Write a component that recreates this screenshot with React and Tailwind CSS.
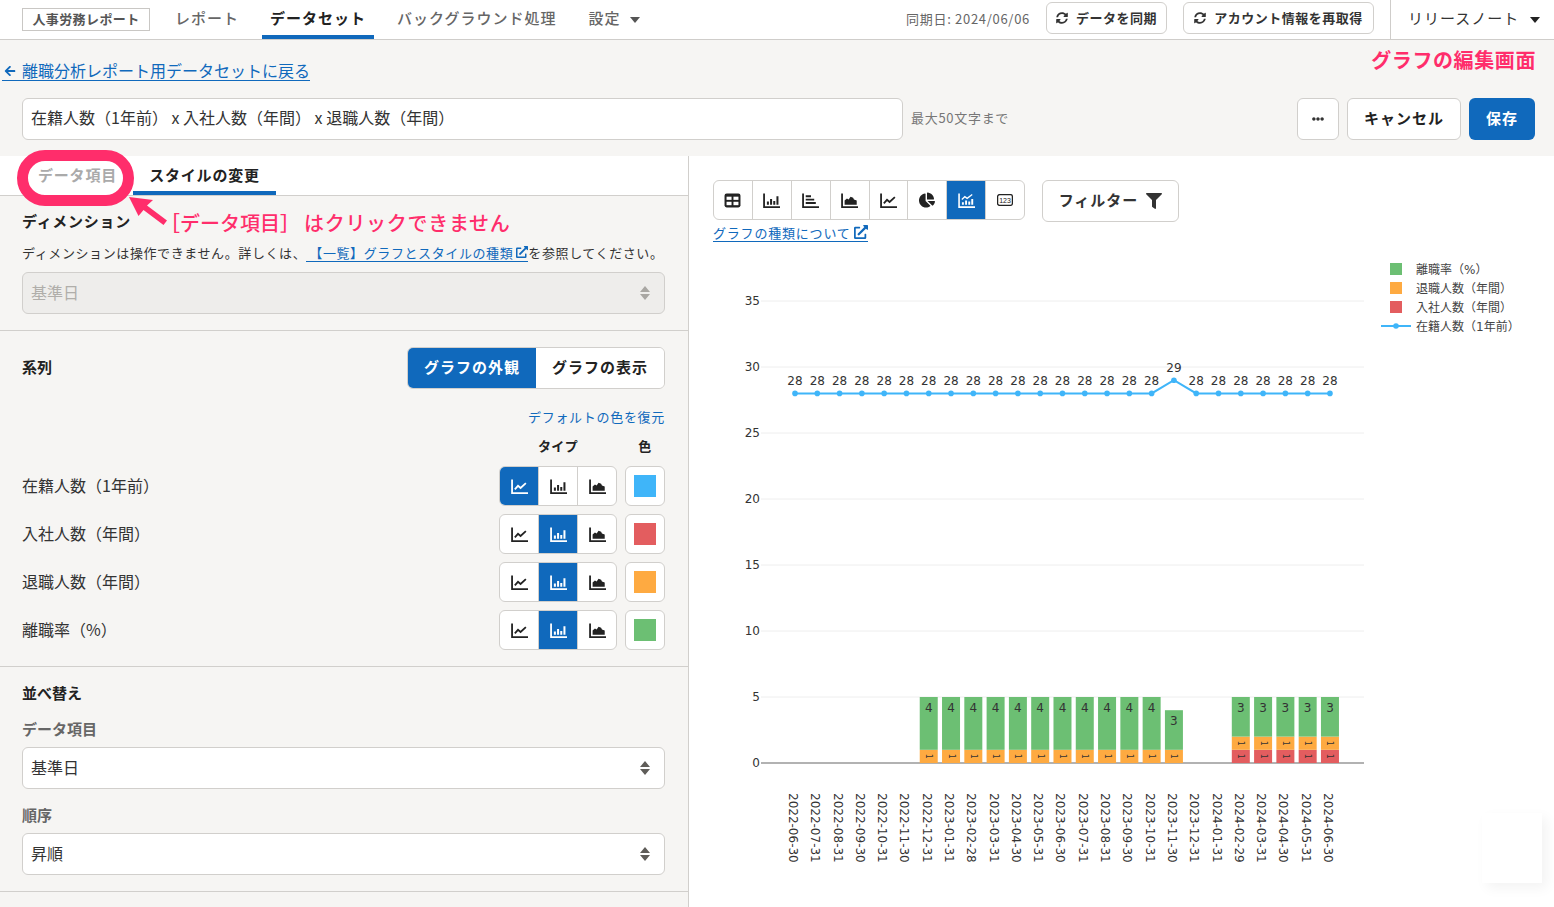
import { FaSyncAlt, FaFilter, FaExternalLinkAlt, FaChartPie, FaEllipsisH, FaArrowLeft } from 'react-icons/fa';

const dates = [
  '2022-06-30', '2022-07-31', '2022-08-31', '2022-09-30', '2022-10-31', '2022-11-30', '2022-12-31', '2023-01-31', '2023-02-28',
  '2023-03-31', '2023-04-30', '2023-05-31', '2023-06-30', '2023-07-31', '2023-08-31', '2023-09-30', '2023-10-31', '2023-11-30',
  '2023-12-31', '2024-01-31', '2024-02-29', '2024-03-31', '2024-04-30', '2024-05-31', '2024-06-30',
];
const headcount = dates.map((_, i) => (i === 17 ? 29 : 28));
const joined = dates.map((_, i) => (i >= 20 ? 1 : 0));
const left = dates.map((_, i) => (i >= 6 && i <= 17) || i >= 20 ? 1 : 0);
const rate = dates.map((_, i) => {
  if (i >= 6 && i <= 16) return 4;
  if (i === 17 || i >= 20) return 3;
  return 0;
});

const BLUE = '#3fb5f9';
const RED = '#e35d5f';
const ORANGE = '#feaa41';
const GREEN = '#6cbf73';
const PINK = '#ff2d6b';

const xAt = (i) => 795 + i * 22.29;
const yAt = (v) => 763 - v * 13.2;

function LineIcon() {
  return (
    <svg viewBox="0 0 16 16" className="w-[17px] h-[17px]" fill="none" stroke="currentColor" strokeWidth="1.7">
      <path d="M1 1.500v12.700h15" />
      <path d="M3.600 10.600 6.600 7.400l2.400 2 5-4.600" />
    </svg>
  );
}

function BarIcon() {
  return (
    <svg viewBox="0 0 16 16" className="w-[17px] h-[17px]" fill="none" stroke="currentColor" strokeWidth="1.7">
      <path d="M1 1.500v12.700h15" />
      <path d="M4.600 12V9M7.600 12V6.500M10.600 12V8.500M13.600 12V4" strokeWidth="1.9" />
    </svg>
  );
}

function HBarIcon() {
  return (
    <svg viewBox="0 0 16 16" className="w-[17px] h-[17px]" fill="none" stroke="currentColor" strokeWidth="1.7">
      <path d="M1 1.500v12.700h15" />
      <path d="M3.500 4h5M3.500 7.200h8M3.500 10.400h9.500" strokeWidth="1.8" />
    </svg>
  );
}

function AreaIcon() {
  return (
    <svg viewBox="0 0 16 16" className="w-[17px] h-[17px]" fill="none" stroke="currentColor" strokeWidth="1.7">
      <path d="M1 1.500v12.700h15" />
      <path d="M3.400 12V8l2.200-1.800 1.600.8 1.800-2.600 2.400 1 .8 1.600 2.600 1V12z" fill="currentColor" stroke="none" />
    </svg>
  );
}

function ComboIcon() {
  return (
    <svg viewBox="0 0 16 16" className="w-[17px] h-[17px]" fill="none" stroke="currentColor" strokeWidth="1.5">
      <path d="M1 1.500v12.700h15" />
      <path d="M3.600 7 6.400 4.400l2.200 1.600 4.800-3.600" strokeWidth="1.2" />
      <path d="M4.600 12V9.600M7.600 12V8M10.600 12V9M13.400 12V6.600" strokeWidth="1.8" />
    </svg>
  );
}

function TableIcon() {
  return (
    <svg viewBox="0 0 16 16" className="w-[17px] h-[17px]">
      <rect x="0.500" y="1.500" width="15" height="13" rx="2" fill="currentColor" />
      <rect x="2.400" y="4.400" width="4.700" height="3" fill="#fff" />
      <rect x="8.900" y="4.400" width="4.700" height="3" fill="#fff" />
      <rect x="2.400" y="9.200" width="4.700" height="3.200" fill="#fff" />
      <rect x="8.900" y="9.200" width="4.700" height="3.200" fill="#fff" />
    </svg>
  );
}

function NumberIcon() {
  return (
    <svg viewBox="0 0 16 12" className="w-4 h-3" fill="none">
      <rect x="0.600" y="0.600" width="14.800" height="10.800" rx="2" stroke="currentColor" strokeWidth="1.3" />
      <text x="8" y="8.600" textAnchor="middle" fontSize="7" fill="currentColor" fontFamily="Liberation Sans">123</text>
    </svg>
  );
}

function CaretDown({ className }) {
  return (
    <svg viewBox="0 0 10 6" className={className} fill="currentColor">
      <path d="M0 0h10L5 6z" />
    </svg>
  );
}

function SelectBox({ value, disabled }) {
  return (
    <div className={`h-[42px] rounded-md border border-[#d1cfcc] flex items-center justify-between pl-2 pr-[14px] text-base ${disabled ? 'bg-[#eeedeb] text-[#b0aeaa]' : 'bg-white text-[#333]'}`}>
      <span className="pb-[2px]">{value}</span>
      <svg viewBox="0 0 10 14" className={`w-2.5 h-3.5 ${disabled ? 'text-[#a9a7a3]' : 'text-[#5f5d59]'}`} fill="currentColor">
        <path d="M5 0l5 6H0zM5 14l5-6H0z" />
      </svg>
    </div>
  );
}

function SeriesRow({ name, active, color }) {
  const types = [LineIcon, BarIcon, AreaIcon];
  return (
    <div className="h-10 flex items-center">
      <span className="flex-1 text-base text-[#333] pb-[3px]">{name}</span>
      <div className="flex h-10 w-[118px] border border-[#d1cfcc] rounded-md overflow-hidden bg-white">
        {types.map((Icon, i) => (
          <div
            key={i}
            className={`flex-1 flex items-center justify-center ${i > 0 ? 'border-l border-[#d1cfcc]' : ''} ${i === active ? 'bg-[#1069bc] text-white' : 'text-[#222]'}`}
          >
            <Icon />
          </div>
        ))}
      </div>
      <div className="ml-2 w-10 h-10 border border-[#d1cfcc] rounded-md bg-white flex items-center justify-center">
        <div className="w-[22px] h-[22px]" style={{ backgroundColor: color }}></div>
      </div>
    </div>
  );
}

function Chart() {
  return (
    <svg viewBox="689 250 865 657" className="block w-[865px] h-[657px] mt-2" fontFamily="'DejaVu Sans','Noto Sans CJK JP',sans-serif">
      {/* grid */}
      {[5, 10, 15, 20, 25, 30, 35].map((v) => (
        <line key={v} x1="761" x2="1364" y1={yAt(v)} y2={yAt(v)} stroke="#eeeeee" />
      ))}
      <line x1="761" x2="1364" y1="763" y2="763" stroke="#999999" strokeWidth="1.5" />
      {[0, 5, 10, 15, 20, 25, 30, 35].map((v) => (
        <text key={v} x="760" y={yAt(v) + 4} textAnchor="end" fontSize="12" fill="#333">{v}</text>
      ))}

      {/* stacked bars */}
      {dates.map((d, i) => {
        const x = xAt(i) - 9;
        const redTop = yAt(joined[i]);
        const orangeTop = yAt(joined[i] + left[i]);
        const greenTop = yAt(joined[i] + left[i] + rate[i]);
        return (
          <g key={d}>
            {joined[i] > 0 && (
              <>
                <rect x={x} y={redTop} width="18" height="13.200" fill={RED} />
                <text transform={`translate(${xAt(i)} ${redTop + 6.6}) rotate(90)`} textAnchor="middle" dominantBaseline="central" fontSize="8" fill="#333">1</text>
              </>
            )}
            {left[i] > 0 && (
              <>
                <rect x={x} y={orangeTop} width="18" height="13.200" fill={ORANGE} />
                <text transform={`translate(${xAt(i)} ${orangeTop + 6.6}) rotate(90)`} textAnchor="middle" dominantBaseline="central" fontSize="8" fill="#333">1</text>
              </>
            )}
            {rate[i] > 0 && (
              <>
                <rect x={x} y={greenTop} width="18" height={orangeTop - greenTop} fill={GREEN} />
                <text x={xAt(i)} y={greenTop + 15} textAnchor="middle" fontSize="12" fill="#333">{rate[i]}</text>
              </>
            )}
            <text transform={`translate(${xAt(i) - 6} 793) rotate(90)`} fontSize="12" fill="#333">{d}</text>
          </g>
        );
      })}

      {/* headcount line */}
      <polyline points={headcount.map((v, i) => `${xAt(i)},${yAt(v)}`).join(' ')} fill="none" stroke={BLUE} strokeWidth="2" />
      {headcount.map((v, i) => (
        <g key={i}>
          <circle cx={xAt(i)} cy={yAt(v)} r="2.800" fill={BLUE} />
          <text x={xAt(i)} y={yAt(v) - 8} textAnchor="middle" fontSize="12" fill="#333">{v}</text>
        </g>
      ))}

      {/* legend */}
      <rect x="1390" y="263" width="12" height="12" fill={GREEN} />
      <rect x="1390" y="282" width="12" height="12" fill={ORANGE} />
      <rect x="1390" y="301" width="12" height="12" fill={RED} />
      <line x1="1381" x2="1411" y1="326" y2="326" stroke={BLUE} strokeWidth="2" />
      <circle cx="1396" cy="326" r="2.800" fill={BLUE} />
      <text x="1416" y="274" fontSize="12" fill="#444">離職率（%）</text>
      <text x="1416" y="293" fontSize="12" fill="#444">退職人数（年間）</text>
      <text x="1416" y="312" fontSize="12" fill="#444">入社人数（年間）</text>
      <text x="1416" y="331" fontSize="12" fill="#444">在籍人数（1年前）</text>
    </svg>
  );
}

function App() {
  const chartTypes = [TableIcon, BarIcon, HBarIcon, AreaIcon, LineIcon, null, ComboIcon, NumberIcon];

  return (
    <div className="relative h-[907px] overflow-hidden bg-[#f6f5f3] flex flex-col font-['Noto_Sans_CJK_JP',sans-serif] text-[#222]">
      {/* Header */}
      <header className="h-10 shrink-0 bg-white border-b border-[#cfcdca] flex items-stretch pl-[22px]">
        <div className="self-start mt-2 h-[23px] w-[128px] border border-[#c9c7c4] flex items-center justify-center text-[13px] font-bold tracking-[0.4px] text-[#555] pb-[1px]">人事労務レポート</div>
        <nav className="ml-[17px] flex items-stretch text-[15px] font-medium tracking-[1px] text-[#666]">
          <a className="px-2 flex items-center pb-[2px]">レポート</a>
          <a className="ml-[15px] px-2 flex items-center font-bold text-[#222] border-b-4 border-[#1069bc] pt-[2px]">データセット</a>
          <a className="ml-[15px] px-2 flex items-center pb-[2px]">バックグラウンド処理</a>
          <a className="ml-[16px] px-2 flex items-center pb-[2px]">
            設定
            <CaretDown className="w-2.5 h-1.5 ml-[10px] mt-[2px] text-[#555]" />
          </a>
        </nav>
        <div className="ml-auto flex items-center">
          <span className="text-[13px] text-[#666] tracking-[0.7px] pb-[2px]">同期日: 2024/06/06</span>
          <button className="ml-4 h-8 w-[121px] mb-[3px] bg-white border border-[#d1cfcc] rounded-md flex items-center justify-center gap-2 text-[13px] font-bold tracking-[0.5px] text-[#333]">
            <FaSyncAlt className="w-3 h-3" />
            データを同期
          </button>
          <button className="ml-4 h-8 w-[191px] mb-[3px] bg-white border border-[#d1cfcc] rounded-md flex items-center justify-center gap-2 text-[13px] font-bold tracking-[0.5px] text-[#333]">
            <FaSyncAlt className="w-3 h-3" />
            アカウント情報を再取得
          </button>
          <div className="ml-4 h-full border-l border-[#cfcdca] w-[164px] pl-[17px] flex items-center">
            <span className="text-[15px] tracking-[1px] text-[#333] pb-[3px]">リリースノート</span>
            <CaretDown className="w-2.5 h-1.5 ml-[11px] text-[#222]" />
          </div>
        </div>
      </header>

      {/* Title area */}
      <div className="relative h-[116px] shrink-0 flex flex-col">
        <a className="mt-[18px] ml-[2px] h-[23px] pt-[2px] self-start flex items-center gap-[4px] text-base leading-none text-[#1069bc] border-b border-[#1069bc]">
          <FaArrowLeft className="w-3.5 h-3 ml-[1px] mr-[1px] mt-[2px]" />
          離職分析レポート用データセットに戻る
        </a>
        <div className="mt-[17px] pl-[22px] pr-[19px] flex items-center">
          <div className="w-[881px] h-[42px] bg-white border border-[#d1cfcc] rounded-md flex items-center pl-2 pb-[4px] text-base text-[#333]">
            在籍人数（1年前） x 入社人数（年間） x 退職人数（年間）
          </div>
          <span className="ml-2 text-[13px] tracking-[0.7px] text-[#777] pb-[3px]">最大50文字まで</span>
          <button className="ml-auto w-[42px] h-[42px] bg-white border border-[#d1cfcc] rounded-md flex items-center justify-center">
            <FaEllipsisH className="w-3 h-3 text-[#333]" />
          </button>
          <button className="ml-2 w-[114px] h-[42px] bg-white border border-[#d1cfcc] rounded-md text-[15px] font-bold tracking-[1px] pb-[2px]">キャンセル</button>
          <button className="ml-2 w-[66px] h-[42px] bg-[#1069bc] rounded-md text-[15px] font-bold tracking-[1px] text-white pb-[2px]">保存</button>
        </div>
        <span className="absolute right-[18px] top-[6px] text-[20px] leading-[28px] font-bold tracking-[0.6px] text-[#ff2d6b]">グラフの編集画面</span>
      </div>

      {/* Main */}
      <main className="flex-1 flex min-h-0">
        {/* Settings panel */}
        <div className="relative w-[689px] shrink-0 border-r border-[#d1cfcc]">
          <div className="h-10 bg-white border-b border-[#d1cfcc] flex pl-[22px] text-[15px] font-bold tracking-[0.8px]">
            <div className="w-[111px] flex items-center justify-center text-[#aaa]">データ項目</div>
            <div className="w-[143px] flex items-center justify-center border-b-4 border-[#1069bc] text-[#222] pt-[3px]">スタイルの変更</div>
          </div>

          <section className="pl-[22px] pr-[23px] pt-[15px] pb-4 border-b border-[#d1cfcc]">
            <h2 className="h-5 flex items-center text-[15px] font-bold tracking-[0.7px]">ディメンション</h2>
            <p className="mt-[13px] h-[18px] pb-[1px] flex items-center text-[13px] tracking-[0.6px] text-[#333] whitespace-nowrap">
              ディメンションは操作できません。詳しくは、
              <a className="flex items-center gap-[3px] text-[#1069bc] border-b border-[#1069bc] leading-[17px] pl-[3px]">
                【一覧】グラフとスタイルの種類
                <FaExternalLinkAlt className="w-3 h-3" />
              </a>
              を参照してください。
            </p>
            <div className="mt-[10px]">
              <SelectBox value="基準日" disabled />
            </div>
          </section>

          <section className="pl-[22px] pr-[23px] pt-4 pb-4 border-b border-[#d1cfcc]">
            <div className="flex items-center justify-between">
              <h2 className="text-[15px] font-bold pb-[2px]">系列</h2>
              <div className="flex w-[258px] h-[42px] rounded-md overflow-hidden border border-[#d1cfcc] text-[15px] font-bold tracking-[1px]">
                <div className="flex-1 bg-[#1069bc] text-white flex items-center justify-center pb-[2px]">グラフの外観</div>
                <div className="flex-1 bg-white flex items-center justify-center pb-[2px]">グラフの表示</div>
              </div>
            </div>
            <div className="mt-5 h-[18px] pb-[2px] flex items-center justify-end text-[13px] text-[#1069bc] tracking-[0.7px]">デフォルトの色を復元</div>
            <div className="mt-[11px] h-[18px] pb-[2px] flex items-center text-[13px] font-bold tracking-[0.3px]">
              <span className="ml-auto w-[118px] text-center">タイプ</span>
              <span className="ml-2 w-10 text-center">色</span>
            </div>
            <div className="mt-[10px] flex flex-col gap-2">
              <SeriesRow name="在籍人数（1年前）" active={0} color={BLUE} />
              <SeriesRow name="入社人数（年間）" active={1} color={RED} />
              <SeriesRow name="退職人数（年間）" active={1} color={ORANGE} />
              <SeriesRow name="離職率（%）" active={1} color={GREEN} />
            </div>
          </section>

          <section className="pl-[22px] pr-[23px] pt-4 pb-4 border-b border-[#d1cfcc]">
            <h2 className="h-5 flex items-center text-[15px] font-bold">並べ替え</h2>
            <h3 className="mt-4 h-5 flex items-center text-[15px] font-bold text-[#666]">データ項目</h3>
            <div className="mt-2">
              <SelectBox value="基準日" />
            </div>
            <h3 className="mt-4 h-5 flex items-center text-[15px] font-bold text-[#666]">順序</h3>
            <div className="mt-2">
              <SelectBox value="昇順" />
            </div>
          </section>

          {/* Annotation over the tabs */}
          <div className="absolute left-[17px] top-[-6px] w-[117px] h-[56px] rounded-[28px] border-[11px] border-[#ff2d6b]"></div>
          <svg className="absolute left-[120px] top-[30px] w-[60px] h-[50px]" viewBox="120 186 60 50" fill={PINK}>
            <path d="M129 197l24 3-6 5.500 20 15-3.500 4.500-20-15-5 6z" />
          </svg>
          <span className="absolute left-[160px] top-[53px] text-[20px] leading-[28px] font-medium text-[#ff2d6b] whitespace-nowrap">
            ［データ項目］
            <span className="ml-1 tracking-[0.7px]">はクリックできません</span>
          </span>
        </div>

        {/* Preview */}
        <div className="flex-1 min-w-0 bg-white">
          <div className="pt-6 pl-6 flex items-start">
            <div className="flex h-10 w-[312px] border border-[#d1cfcc] rounded-md overflow-hidden">
              {chartTypes.map((Icon, i) => (
                <div
                  key={i}
                  className={`flex-1 flex items-center justify-center ${i > 0 ? 'border-l border-[#d1cfcc]' : ''} ${i === 6 ? 'bg-[#1069bc] text-white' : 'text-[#222]'}`}
                >
                  {Icon ? <Icon /> : <FaChartPie className="w-4 h-4" />}
                </div>
              ))}
            </div>
            <button className="ml-[17px] w-[137px] h-[42px] border border-[#d1cfcc] rounded-md flex items-center justify-center gap-[8px] text-[15px] font-bold tracking-[1px] text-[#333]">
              <span className="pb-[2px]">フィルター</span>
              <FaFilter className="w-4 h-4" />
            </button>
          </div>
          <a className="ml-6 mt-[1px] flex w-fit items-center gap-[3px] h-[19px] text-[13px] tracking-[0.8px] text-[#1069bc] border-b border-[#1069bc]">
            <span className="pt-[2px]">グラフの種類について</span>
            <FaExternalLinkAlt className="w-3.5 h-3.5" />
          </a>
          <Chart />
        </div>
      </main>

      {/* Faint shadow of a floating widget, bottom right */}
      <div className="absolute right-[12px] bottom-[24px] w-[60px] h-[70px] bg-white shadow-[5px_5px_12px_rgba(0,0,0,0.05)]"></div>
    </div>
  );
}

export default App;
